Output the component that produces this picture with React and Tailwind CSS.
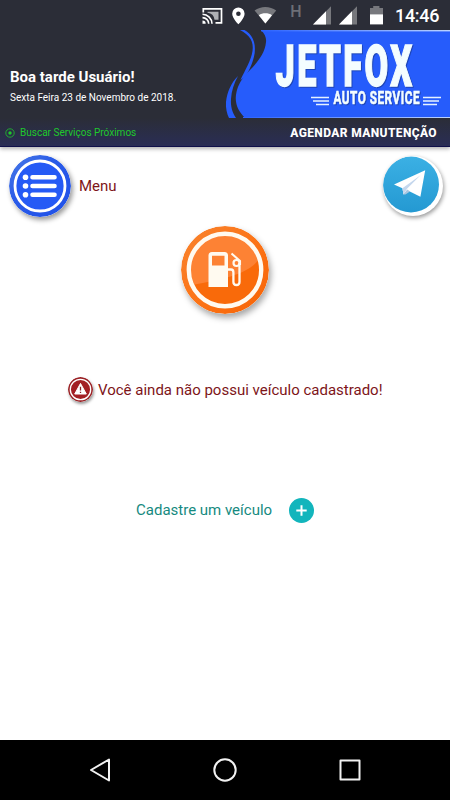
function StatusBar() {
  return (
    <div className="h-[30px] flex justify-end">
      <svg width="195" height="30" viewBox="0 0 195 30" fill="#fff">
        {/* cast */}
        <g transform="translate(-0.5 0)">
          <path d="M3.8 12.5V8.8H22v14h-6" fill="none" stroke="#fff" strokeWidth="1.7" />
          <path d="M8 11.8h11v8h-4A8 8 0 0 0 8 12.8Z" fill="#aeb0b5" />
          <path d="M3 14.3a9.5 9.5 0 0 1 9.5 9.5M3 17.6a6.2 6.2 0 0 1 6.2 6.2" fill="none" stroke="#fff" strokeWidth="1.6" />
          <path d="M3 20.6a3.2 3.2 0 0 1 3.2 3.2H3Z" />
        </g>
        {/* location */}
        <path fillRule="evenodd" d="M38.4 7.5a6.2 6.2 0 0 0-6.2 6.2c0 4.4 6.2 10.6 6.2 10.6s6.2-6.2 6.2-10.6a6.2 6.2 0 0 0-6.2-6.2Zm0 4a2.3 2.3 0 1 1 0 4.6 2.3 2.3 0 0 1 0-4.6Z" />
        {/* wifi */}
        <path d="M54.6 10.5c6-4.800 15.4-4.800 21.600 0L65.400 23.600Z" fill="#77787d" />
        <path d="M58.8 15.3c3.6-2.6 9.6-2.6 13.2 0l-6.600 8.300Z" />
        <text x="90.3" y="16.5" fontSize="16" fill="#6d6f76" className="font-['Roboto']" fontWeight="500">H</text>
        <path d="M131 6.300v18.200h-18Z" fill="#77787d" />
        <path d="M126 11.300v13.200h-13Z" />
        <path d="M157 6.300v18.200h-18Z" fill="#77787d" />
        <path d="M152 11.300v13.200h-13Z" />
        {/* battery */}
        <path d="M170 8h3.200V6h6.200v2h3.600v7h-13Z" fill="#77787d" />
        <path d="M170 14.400h13v10h-13Z" />
      </svg>
      <span className="w-[55px] pt-[3px] text-[18px] leading-[25px] tracking-[-0.3px] font-medium">14:46</span>
    </div>
  );
}

function Banner() {
  return (
    <svg width="225" height="88" viewBox="0 0 225 88" className="shrink-0 overflow-visible font-['Roboto']">
      <defs>
        <linearGradient id="edge" x1="0" x2="1">
          <stop offset="0" stopColor="#2b62ff" />
          <stop offset="1" stopColor="#bcd4ff" />
        </linearGradient>
      </defs>
      <g fill="#265cfb">
        <path d="M36 0C40 4 41.5 8 41 12C40 24 31 34 24 41C17 48 13 55 11.5 62C9 73 13 81 20 88H225V0Z" />
        <path d="M15 0C25 5 29 12 27.5 21C26 31 20 40 15.5 50L20 47C24 41 28 33 29.7 23C31 12 27 4 19.5 0Z" />
        <path d="M13 46C6 53 2 62 1 72C0.5 78 2 84 4 88H11C7 82 5.5 76 6 69C6.5 61 9 53 13 46Z" />
      </g>
      <rect x="36" width="189" height="1.4" fill="url(#edge)" />
      <rect x="18" y="87" width="207" height="1" fill="url(#edge)" />
      <g fill="#f4fdff" stroke="#f4fdff" className="drop-shadow-[1.5px_1.5px_0.5px_#1e46b8]">
        <text x="50.5" y="56" fontSize="57" fontWeight="900" strokeWidth="1.4" letterSpacing="4" textLength="139" lengthAdjust="spacingAndGlyphs">JETFOX</text>
        <text x="108.5" y="74" fontSize="18.5" fontWeight="700" strokeWidth="0.6" letterSpacing="0.8" textLength="86.5" lengthAdjust="spacingAndGlyphs">AUTO SERVICE</text>
      </g>
      <path d="M86 67.500h18M88 71h16M91 74.500h13M198 67.500h18M198 71h16M198 74.500h14" stroke="#e6f2ff" strokeWidth="1.3" />
    </svg>
  );
}

function MenuIcon() {
  return (
    <svg width="62" height="62" viewBox="0 0 62 62" className="rounded-full shadow-[2px_3px_5px_rgba(0,0,0,0.4)]">
      <defs>
        <linearGradient id="menuRim" x1="0" y1="0" x2="1" y2="1">
          <stop offset="0" stopColor="#4a7be6" />
          <stop offset="0.4" stopColor="#2a5be8" />
          <stop offset="1" stopColor="#1f50e8" />
        </linearGradient>
      </defs>
      <circle cx="31" cy="31" r="31" fill="url(#menuRim)" />
      <circle cx="31" cy="31" r="25" fill="#255af5" stroke="#fff" strokeWidth="2.8" />
      <path d="M23.5 22.300h22M23.500 31h22M23.500 39.700h22" stroke="#fff" strokeWidth="4.6" strokeLinecap="round" />
      <g fill="#fff">
        <circle cx="16.5" cy="22.3" r="2.8" />
        <circle cx="16.5" cy="31" r="2.8" />
        <circle cx="16.5" cy="39.7" r="2.8" />
      </g>
    </svg>
  );
}

function TelegramIcon() {
  return (
    <svg width="60" height="60" viewBox="0 0 60 60" className="rounded-full bg-white shadow-[1px_2px_4px_rgba(0,0,0,0.4)]">
      <defs>
        <linearGradient id="tg" x1="0" y1="0" x2="0" y2="1">
          <stop offset="0" stopColor="#3bb0e4" />
          <stop offset="1" stopColor="#2499d2" />
        </linearGradient>
      </defs>
      <circle cx="28" cy="28.500" r="28" fill="url(#tg)" />
      <path d="M11 28.500L42.200 14.200 37.400 40.700 24.800 34.500 20.500 38.500 19.400 32.200Z" fill="#fff" />
      <path d="M19.400 32.200L37.500 19.200 24 32.700 20.500 38.500Z" fill="#c5d7ed" />
      <path d="M24.200 33.400L27 35.500 22.400 38.500 20.500 38.500Z" fill="#a9c6e0" />
    </svg>
  );
}

function FuelIcon() {
  return (
    <svg width="88" height="88" viewBox="0 0 88 88" className="rounded-full shadow-[2px_4px_6px_rgba(0,0,0,0.35)]">
      <defs>
        <linearGradient id="fuelRim" x1="0" y1="0" x2="1" y2="1">
          <stop offset="0" stopColor="#f8842f" />
          <stop offset="0.5" stopColor="#fc7417" />
          <stop offset="1" stopColor="#f66305" />
        </linearGradient>
      </defs>
      <circle cx="44" cy="44" r="44" fill="url(#fuelRim)" />
      <circle cx="44" cy="44" r="36" fill="#f96a0a" />
      <path d="M8 44A36 36 0 0 1 78 33C68 48 43 53 11 59A36 36 0 0 1 8 44Z" fill="#fd8234" />
      <circle cx="44" cy="44" r="36.2" fill="none" stroke="#fffaf0" strokeWidth="4.4" />
      <g fill="#fffaf0">
        <path fillRule="evenodd" d="M27.500 61V29.500a3.500 3.500 0 0 1 3.500-3.500h12.500a3.500 3.500 0 0 1 3.500 3.500V61ZM31 29.800v9.600h12.500v-9.600Z" />
        <path d="M47 43.500h3c1.700 0 2.400 1 2.400 3V56c0 4 6.100 4 6.100 0V37" fill="none" stroke="#fffaf0" strokeWidth="2.3" />
        <circle cx="55.5" cy="37" r="3" fill="none" stroke="#fffaf0" strokeWidth="2.2" />
        <path d="M50.500 27.500l8.500 7.500v4" fill="none" stroke="#fffaf0" strokeWidth="2.1" />
      </g>
    </svg>
  );
}

function WarningIcon() {
  return (
    <svg width="25" height="25" viewBox="0 0 25 25" className="rounded-full shadow-[1px_2px_3px_rgba(0,0,0,0.4)]">
      <circle cx="12.5" cy="12.5" r="12.5" fill="#9b2226" />
      <circle cx="12.5" cy="12.5" r="10.2" fill="#a31f24" stroke="#fff" strokeWidth="1.3" />
      <path d="M12.500 6.400L18.300 17H6.700Z" fill="#fff" stroke="#fff" strokeWidth="1" strokeLinejoin="round" />
      <path d="M12.500 9.800v3.800M12.500 14.800v1.300" stroke="#8c2024" strokeWidth="1.3" />
    </svg>
  );
}

function Header() {
  return (
    <header className="h-[147px] bg-[#2b2d37] text-white border-b border-[#10104a] shadow-[0_2px_4px_rgba(0,0,0,0.3)]">
      <StatusBar />
      <div className="flex justify-between">
        <div className="pl-[10px] pt-[37px] whitespace-nowrap">
          <h1 className="text-[15px] leading-5 font-bold">Boa tarde Usuário!</h1>
          <p className="text-[10px] leading-[14px] mt-1">Sexta Feira 23 de Novembro de 2018.</p>
        </div>
        <Banner />
      </div>
      <div className="h-[28px] flex items-center justify-between pl-[5px] pr-[13px] bg-linear-to-b from-[#2b2d37] to-[#2a2d55]">
        <div className="flex items-center gap-[5px] text-[#1fc92c] pt-px">
          <svg width="10" height="10" viewBox="0 0 10 10">
            <circle cx="5" cy="5" r="4.2" fill="none" stroke="currentColor" strokeWidth="0.8" />
            <circle cx="5" cy="5" r="1.7" fill="currentColor" />
          </svg>
          <span className="text-[10px]">Buscar Serviços Próximos</span>
        </div>
        <span className="text-[12px] font-extrabold tracking-[0.38px] pt-px">AGENDAR MANUTENÇÃO</span>
      </div>
    </header>
  );
}

export default function App() {
  return (
    <div className="w-[450px] h-[800px] flex flex-col bg-white overflow-hidden font-['Roboto',sans-serif]">
      <Header />
      <main className="flex-1 flex flex-col">
        <div className="flex items-start justify-between pt-2 pl-[9px] pr-[7px] h-[79px]">
          <div className="flex items-center gap-2">
            <MenuIcon />
            <span className="text-[15px] text-[#7d1519]">Menu</span>
          </div>
          <div className="pt-px">
            <TelegramIcon />
          </div>
        </div>
        <div className="flex justify-center">
          <FuelIcon />
        </div>
        <div className="flex items-center gap-[5px] mt-[63px] pl-[68px] h-[25px]">
          <WarningIcon />
          <span className="text-[15px] text-[#7d1519] pt-px">Você ainda não possui veículo cadastrado!</span>
        </div>
        <div className="flex items-center gap-[17px] mt-[96px] pl-[136px] h-[25px]">
          <span className="text-[15px] text-[#168a80]">Cadastre um veículo</span>
          <svg width="25" height="25" viewBox="0 0 25 25">
            <circle cx="12.5" cy="12.5" r="12.5" fill="#12b5bc" />
            <path d="M12.500 7.300v10.400M7.300 12.500h10.400" stroke="#fff" strokeWidth="2" />
          </svg>
        </div>
      </main>
      <nav className="h-[60px] bg-black flex items-center justify-between px-[88px]">
        <svg width="24" height="24" viewBox="0 0 24 24" fill="none" stroke="#f2f2f2" strokeWidth="2" strokeLinejoin="round">
          <path d="M21 1.500v21L3 12Z" />
        </svg>
        <svg width="24" height="24" viewBox="0 0 24 24" fill="none" stroke="#f2f2f2" strokeWidth="2">
          <circle cx="12" cy="12" r="10.7" />
        </svg>
        <svg width="24" height="24" viewBox="0 0 24 24" fill="none" stroke="#f2f2f2" strokeWidth="2" strokeLinejoin="round">
          <path d="M2.500 2.500h19v19h-19Z" />
        </svg>
      </nav>
    </div>
  );
}
